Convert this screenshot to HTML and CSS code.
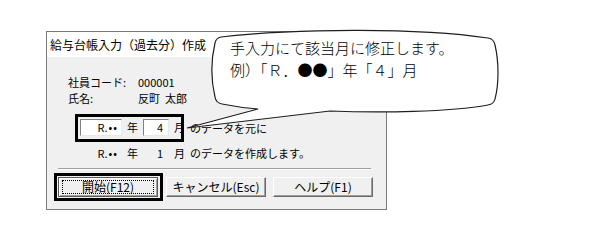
FILE: index.html
```html
<!DOCTYPE html>
<html lang="ja">
<head>
<meta charset="utf-8">
<link rel="stylesheet" href="styles.css">
</head>
<body>
<div class="dialog">
  <div class="titlebar">給与台帳入力（過去分）作成</div>
  <div class="content">
    <div class="info">
      <span class="label">社員コード:</span><span class="value">000001</span>
      <span class="label">氏名:</span><span class="value">反町&nbsp;&nbsp;太郎</span>
    </div>
    <div class="period-row">
      <div class="mark">
        <span class="field field-year">R.<span class="dots">••</span></span>
        <span class="unit">年</span>
        <span class="field field-month">4</span>
        <span class="unit">月</span>
      </div>
      <span class="desc">のデータを元に</span>
    </div>
    <div class="period-row period-row-static">
      <div class="mark mark-hidden">
        <span class="field field-year field-plain">R.<span class="dots">••</span></span>
        <span class="unit">年</span>
        <span class="field field-month field-plain">1</span>
        <span class="unit">月</span>
      </div>
      <span class="desc">のデータを作成します。</span>
    </div>
    <div class="separator"></div>
    <div class="buttons">
      <div class="mark mark-button">
        <button class="btn btn-default"><span class="focus">開始(F12)</span></button>
      </div>
      <button class="btn btn-cancel">キャンセル(Esc)</button>
      <button class="btn btn-help">ヘルプ(F1)</button>
    </div>
  </div>
</div>

<div class="callout">
  <svg class="callout-shape" width="602" height="225" viewBox="0 0 602 225">
    <path d="M 221 37 C 300 28, 420 28, 488 38 Q 494 39, 495 45 C 499 62, 499 84, 495 99 Q 494 104, 488 105 C 450 112, 380 113, 330 111 L 187 128 L 258 109 C 245 108, 232 106, 222 104 Q 216 103, 215 97 C 211 80, 211 60, 215 43 Q 216 38, 221 37 Z" fill="#ffffff" stroke="#1e1e1e" stroke-width="1.2"/>
  </svg>
  <div class="callout-text">
    <div>手入力にて該当月に修正します。</div>
    <div>例）「Ｒ．●●」年「４」月</div>
  </div>
</div>
</body>
</html>
```

FILE: styles.css
```css
html, body {
  margin: 0;
  padding: 0;
  background: #ffffff;
}

body {
  width: 602px;
  height: 225px;
  position: relative;
  overflow: hidden;
  font-family: "Noto Sans CJK JP", "Noto Sans", sans-serif;
  color: #000000;
}

.dialog {
  box-sizing: border-box;
  margin: 31px 0 0 46px;
  width: 341px;
  height: 179px;
  border: 1px solid #7a7a7a;
  display: flex;
  flex-direction: column;
}

.titlebar {
  height: 25px;
  line-height: 25px;
  background: #ffffff;
  padding-left: 3px;
  font-size: 12px;
  white-space: nowrap;
}

.content {
  flex: 1;
  background: #f0f0f0;
  display: flex;
  flex-direction: column;
  font-size: 11px;
}

.info {
  display: grid;
  grid-template-columns: 70px auto;
  grid-auto-rows: 16px;
  line-height: 16px;
  padding: 17px 0 0 21px;
}

.period-row {
  display: flex;
  align-items: center;
  margin: 8px 0 0 28px;
  height: 28px;
}

.period-row-static {
  margin-top: 2px;
  height: 18px;
}

.mark {
  box-sizing: border-box;
  display: flex;
  align-items: center;
  border: 3px solid #000000;
  padding: 1px 2px 3px 2px;
  width: 109px;
  height: 28px;
}

.mark-hidden {
  border-color: transparent;
  height: 18px;
  padding: 0 2px;
}

.field {
  box-sizing: border-box;
  display: block;
  flex: none;
  height: 17px;
  line-height: 15px;
  background: #ffffff;
  border: 1px solid;
  border-color: #828282 #e8e8e8 #e8e8e8 #828282;
  text-align: right;
  padding-right: 4px;
  white-space: nowrap;
}

.dots {
  letter-spacing: 1px;
  margin-left: 1px;
}

.field-plain {
  background: transparent;
  border-color: transparent;
}

.field-year {
  width: 42px;
  padding-right: 3px;
}

.field-month {
  width: 26px;
  padding-right: 5px;
}

.unit {
  display: block;
  flex: none;
  margin: 0 5px;
}

.desc {
  margin-left: 6px;
  white-space: nowrap;
}

.separator {
  margin: 6px 15px 0 11px;
  border-top: 1px solid #a0a0a0;
  border-bottom: 1px solid #ffffff;
  height: 0;
}

.buttons {
  display: flex;
  align-items: center;
  margin: 3px 0 0 7px;
  height: 28px;
}

.mark-button {
  width: 109px;
  padding: 1px;
}

.btn {
  box-sizing: border-box;
  flex: none;
  width: 100px;
  height: 20px;
  padding: 0;
  font-family: "Noto Sans CJK JP", "Noto Sans", sans-serif;
  font-size: 12px;
  line-height: 16px;
  color: #000000;
  background: #f0f0f0;
  border: 1px solid;
  border-color: #ffffff #696969 #696969 #ffffff;
  box-shadow: inset -1px -1px 0 #a0a0a0;
}

.btn-default {
  border-color: #5a5a5a;
  box-shadow: inset 1px 1px 0 #ffffff, inset -1px -1px 0 #a0a0a0;
  padding: 2px 3px;
}

.focus {
  box-sizing: border-box;
  display: block;
  height: 14px;
  line-height: 12px;
  border: 1px dotted #000000;
}

.btn-cancel {
  margin-left: 3px;
}

.btn-help {
  margin-left: 7px;
}

.callout {
  position: absolute;
  left: 0;
  top: 0;
  width: 602px;
  height: 225px;
  pointer-events: none;
}

.callout-shape {
  position: absolute;
  left: 0;
  top: 0;
}

.callout-text {
  position: absolute;
  left: 230px;
  top: 37px;
  font-size: 15px;
  font-weight: 300;
  line-height: 22px;
  white-space: nowrap;
}
```
